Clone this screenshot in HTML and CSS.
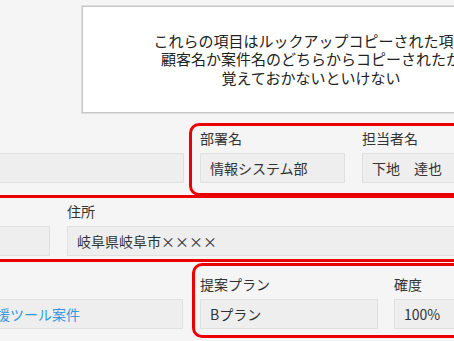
FILE: index.html
```html
<!DOCTYPE html>
<html lang="ja">
<head>
    <meta charset="UTF-8">
    <meta name="viewport" content="width=device-width, initial-scale=1.0">
    <title>案件詳細</title>
    <link rel="stylesheet" href="styles.css">
</head>
<body>
    <div class="sheet">
        <div class="note-row">
            <div class="note">
                <p>これらの項目はルックアップコピーされた項目<br>顧客名か案件名のどちらからコピーされたか<br>覚えておかないといけない</p>
            </div>
        </div>

        <div class="row row-top">
            <div class="field field-customer">
                <div class="label"></div>
                <div class="value"></div>
            </div>
            <div class="mark mark-top">
                <div class="field field-dept">
                    <div class="label">部署名</div>
                    <div class="value">情報システム部</div>
                </div>
                <div class="field field-person">
                    <div class="label">担当者名</div>
                    <div class="value">下地　達也</div>
                </div>
            </div>
        </div>

        <div class="mark mark-wide">
            <div class="field field-zip">
                <div class="label"></div>
                <div class="value"></div>
            </div>
            <div class="field field-address">
                <div class="label">住所</div>
                <div class="value">岐阜県岐阜市××××</div>
            </div>
        </div>

        <div class="row row-bottom">
            <div class="field field-deal">
                <div class="label"></div>
                <div class="value"><a href="#" class="link">営業支援ツール案件</a></div>
            </div>
            <div class="mark mark-bottom">
                <div class="field field-plan">
                    <div class="label">提案プラン</div>
                    <div class="value">Bプラン</div>
                </div>
                <div class="field field-rate">
                    <div class="label">確度</div>
                    <div class="value">100%</div>
                </div>
            </div>
        </div>
    </div>
</body>
</html>
```

FILE: styles.css
```css
html, body {
    margin: 0;
    height: 100%;
}

body {
    font-family: "Noto Sans CJK JP", "Noto Sans", sans-serif;
    font-size: 14px;
    color: #333;
    background-color: #f5f5f5;
    overflow: hidden;
}

/* the form is wider than the window, it is cut on both sides */
.sheet {
    width: 720px;
    margin-left: -60px;
}

.note-row {
    padding: 6px 0 0 142px;
}

.note {
    box-sizing: border-box;
    width: 458px;
    height: 107px;
    background-color: #fff;
    border: 1px solid #c6c6c6;
    box-shadow: 0 0 0 1px #dedede;
    display: flex;
    align-items: center;
    justify-content: center;
    text-align: center;
}

.note p {
    margin: 0;
    font-size: 15px;
    line-height: 18.5px;
    color: #222;
}

.row {
    display: flex;
    align-items: flex-start;
}

.field {
    display: flex;
    flex-direction: column;
    gap: 5px;
    flex-shrink: 0;
}

.label {
    line-height: 20px;
    height: 20px;
    white-space: nowrap;
}

.value {
    box-sizing: border-box;
    height: 30px;
    line-height: 28px;
    padding: 0 9px;
    background-color: #eeeeee;
    border: 1px solid #e0e0e0;
    white-space: nowrap;
    overflow: hidden;
}

.link {
    color: #3498db;
    text-decoration: none;
}

.mark {
    border: 3px solid #ea0000;
    display: flex;
    align-items: flex-start;
}

/* row 1 */
.field-customer {
    width: 240px;
    margin: 15px 0 0 4px;
}

.mark-top {
    margin: 10px 0 0 5px;
    padding: 2px 8px 10px 8px;
    border-radius: 10px;
    gap: 17px;
}

.field-dept {
    width: 145px;
}

.field-person {
    width: 110px;
}

/* row 2 */
.mark-wide {
    margin-top: -1px;
    padding: 3px 1px 3px 1px;
    gap: 17px;
}

.field-zip {
    width: 106px;
}

.field-address {
    width: 420px;
}

/* row 3 */
.field-deal {
    width: 239px;
    margin: 12px 0 0 4px;
}

.mark-bottom {
    margin: 1px 0 0 9px;
    padding: 8px 5px 6px 5px;
    border-radius: 10px;
    gap: 16px;
}

.field-plan {
    width: 178px;
}

.field-rate {
    width: 100px;
}
```
